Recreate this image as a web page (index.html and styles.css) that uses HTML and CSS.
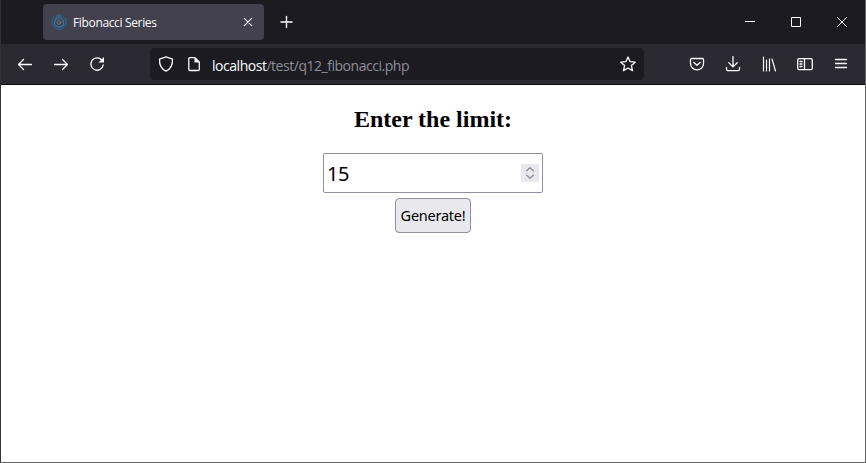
FILE: index.html
```html
<!DOCTYPE html>
<html lang="en">
<head>
<meta charset="utf-8">
<title>Fibonacci Series</title>
<link rel="stylesheet" href="styles.css">
</head>
<body>
<div class="window">
  <header class="tabbar">
    <div class="tab">
      <svg class="favicon" viewBox="0 0 16 16"><path d="M3.500 3L1.200 5.500v5L4 14l4 1.500 4-1.500 2.800-3.500v-5L12.500 3" stroke="#2b5f82" stroke-width="1.500"/><path d="M5 4.500L3.500 8v3L8 13.300l4.500-2.300V7L10.500 4.500" stroke="#3278a0" stroke-width="1.200"/><path d="M6 1.500v4M8 0v5M10 1.500v3" stroke="#347b9e"/><circle cx="8" cy="8.500" r="1.800" stroke="#777b83"/></svg>
      <span class="tab-title">Fibonacci Series</span>
      <svg class="tab-close" viewBox="0 0 16 16"><path d="M4.300 4.300l7.400 7.400M11.700 4.300l-7.400 7.400"/></svg>
    </div>
    <svg class="new-tab" viewBox="0 0 16 16"><path d="M7.500 2.500v11M2 8h11" stroke-width="1.400"/></svg>
    <div class="controls">
      <span><svg viewBox="0 0 16 16"><path d="M3 7.500h10" shape-rendering="crispEdges"/></svg></span>
      <span><svg viewBox="0 0 16 16"><path d="M3.500 3.500h9v9h-9z"/></svg></span>
      <span><svg viewBox="0 0 16 16"><path d="M3 3l10 10M13 3L3 13"/></svg></span>
    </div>
  </header>
  <nav class="toolbar">
    <div class="buttons">
      <span><svg viewBox="0 0 16 16"><path d="M14.500 8.500H1.500M6.500 3.500L1.500 8.500l5 5"/></svg></span>
      <span><svg viewBox="0 0 16 16"><path d="M1.500 8.500h13M9.500 3.500l5 5-5 5"/></svg></span>
      <span><svg viewBox="0 0 16 16"><path d="M12.800 4A6.200 6.200 0 1 0 14.200 9"/><path d="M15 1v5.500H9.500z" fill="#fbfbfe" stroke="none"/></svg></span>
    </div>
    <div class="urlbar">
      <svg viewBox="0 0 16 16"><path d="M8 .800L1.500 3.200c-.2 5.800 1.800 9.800 6.500 12 4.700-2.200 6.700-6.200 6.500-12z"/></svg>
      <svg viewBox="0 0 16 16"><path d="M4 1.700h5l4.300 4.300v7.300a1.200 1.200 0 0 1-1.200 1.200H4a1.200 1.200 0 0 1-1.200-1.200V2.900A1.200 1.200 0 0 1 4 1.700z"/><path d="M8.500 1.500v5h5z" fill="#fbfbfe" stroke="none"/></svg>
      <div class="url"><b>localhost</b>/test/q12_fibonacci.php</div>
      <svg class="star" viewBox="0 0 16 16"><path d="M8 1l2.100 4.700 5.100.5-3.800 3.400 1.100 5L8 12l-4.500 2.600 1.100-5L.8 6.200l5.100-.5z"/></svg>
    </div>
    <div class="buttons end">
      <span><svg viewBox="0 0 16 16"><path d="M2.700 2.500h10.600a1.200 1.200 0 0 1 1.200 1.200V7.500a6.500 6.300 0 0 1-13 0V3.700a1.200 1.200 0 0 1 1.200-1.200z"/><path d="M4.900 6.500L8 9.300l3.100-2.800"/></svg></span>
      <span><svg viewBox="0 0 16 16"><path d="M8 .500v10M3.800 6.700L8 10.900l4.200-4.200M1.500 11.500V13a1.700 1.700 0 0 0 1.700 1.700h9.600a1.700 1.700 0 0 0 1.700-1.700v-1.500"/></svg></span>
      <span><svg viewBox="0 0 16 16"><path d="M2.500 1v14M5.500 4v11M8.500 3v12M11 3l3.500 12" stroke-width="1.200"/></svg></span>
      <span><svg viewBox="0 0 16 16"><rect x=".7" y="2.700" width="14.600" height="11" rx="1.500"/><path d="M7.500 3v10.500M3 5.500h2M3 8h2M3 10.500h2"/></svg></span>
      <span><svg viewBox="0 0 16 16"><path d="M2.500 3.500h11M2.500 7.500h11M2.500 11.500h11"/></svg></span>
    </div>
  </nav>
  <main class="page">
    <h2>Enter the limit:</h2>
    <div class="field">
      <span>15</span>
      <svg class="spinner" viewBox="0 0 18 18"><path d="M5.700 6.700L9 3.700l3.300 3M5.700 11.300l3.300 3 3.300-3"/></svg>
    </div>
    <button class="generate">Generate!</button>
  </main>
</div>
</body>
</html>
```
FILE: styles.css
```css
* { box-sizing: border-box; }
body { margin: 0; background: #fff; }
svg { display: block; width: 16px; height: 16px; flex: none; fill: none; stroke: #fbfbfe; stroke-width: 1.3; stroke-linecap: round; stroke-linejoin: round; }
.window { height: 463px; display: flex; flex-direction: column; border: solid #656565; border-width: 0 1px 1px; border-left-color: #333238; overflow: hidden; }
.tabbar { height: 44px; background: #1c1b22; display: flex; align-items: center; padding-left: 42px; }
.tab { width: 221px; height: 36px; background: #42414d; border-radius: 4px; display: flex; align-items: center; padding: 0 8px; }
.favicon { margin-right: 6px; stroke-width: 1; }
.tab-title { flex: 1; padding-top: 1px; font: 12px "Open Sans", sans-serif; letter-spacing: -0.35px; color: #fbfbfe; white-space: nowrap; }
.tab-close { stroke-width: 1.1; }
.new-tab { margin-left: 15px; }
.controls { display: flex; margin-left: auto; }
.controls span { width: 46px; display: flex; justify-content: center; }
.controls svg { stroke-width: 1; stroke-linejoin: miter; stroke-linecap: butt; }
.toolbar { height: 41px; background: #2b2a33; border-bottom: 1px solid #0c0c0d; display: flex; align-items: center; padding-left: 6px; }
.buttons { display: flex; }
.buttons span { width: 36px; display: flex; justify-content: center; }
.urlbar { width: 494px; height: 32px; margin-left: 35px; background: #1c1b22; border-radius: 4px; display: flex; align-items: center; gap: 12px; padding: 0 8px; }
.url { flex: 1; margin-left: -2px; padding-top: 2px; font: 14px "Open Sans", sans-serif; letter-spacing: -0.47px; color: #8f8e96; white-space: nowrap; }
.url b { font-weight: 400; color: #fbfbfe; }
.end { margin-left: auto; padding-right: 6px; }
.page { flex: 1; display: flex; flex-direction: column; align-items: center; }
h2 { margin: 20px 0; font: bold 24px/28px "Liberation Serif", serif; color: #000; }
.field { width: 220px; height: 40px; border: 1px solid #8f8f9d; border-radius: 2px; display: flex; align-items: center; justify-content: space-between; padding: 0 3px; font: 20px "Noto Sans", sans-serif; letter-spacing: -0.5px; color: #000; }
.spinner { width: 18px; height: 18px; background: #e9e9ed; stroke: #8f8f9d; stroke-width: 1.5; }
.generate { width: 76px; height: 35px; margin-top: 5px; padding: 0 0 2px; border: 1px solid #8f8f9d; border-radius: 4px; background: #e9e9ed; color: #000; font: 14.5px "Noto Sans", sans-serif; letter-spacing: -0.25px; white-space: nowrap; }
```
